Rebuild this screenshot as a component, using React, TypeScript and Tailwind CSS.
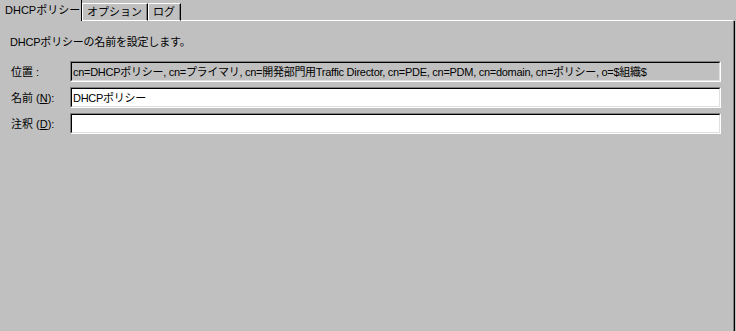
import React from "react";

function Field({ value, gray }: { value?: string; gray?: boolean }) {
  return (
    <div className="w-[651px] h-[21px] border-t border-l border-t-[#808080] border-l-[#808080] border-b border-r border-b-white border-r-white">
      <div
        className={`w-full h-full border-t border-l border-t-black border-l-black border-b border-r border-b-[#dfdfdf] border-r-[#dfdfdf] flex items-center pl-[1px] whitespace-nowrap overflow-hidden tracking-[-0.28px] ${
          gray ? "bg-[#c0c0c0]" : "bg-white"
        }`}
      >
        {value}
      </div>
    </div>
  );
}

export default function App() {
  return (
    <div className="w-[736px] h-[331px] bg-[#c0c0c0] overflow-hidden flex flex-col text-[11px] leading-[14px] text-black font-['Liberation_Sans','Noto_Sans_CJK_JP',sans-serif]">
      <div className="flex items-end h-[21px] mr-[3px]">
        <div className="w-[82px] h-[21px] border-r border-r-black flex items-center pl-[5px] pb-[2px] whitespace-nowrap">
          DHCPポリシー
        </div>
        <div className="h-[18px] w-[66px] border-t border-l border-white border-b border-b-white border-r border-r-black shadow-[inset_-1px_0_0_#808080] flex items-center pl-[4px] whitespace-nowrap">
          オプション
        </div>
        <div className="h-[18px] w-[33px] border-t border-l border-white border-b border-b-white border-r border-r-black shadow-[inset_-1px_0_0_#808080] flex items-center pl-[4px] whitespace-nowrap">
          ログ
        </div>
        <div className="flex-1 h-px bg-white" />
      </div>
      <div className="flex-1 mr-[1px] border-r border-r-black">
        <div className="h-full border-r border-r-[#808080] pl-[10px] pt-[14px]">
          <div className="h-[14px] whitespace-nowrap tracking-[-0.2px]">DHCPポリシーの名前を設定します。</div>
          <div className="mt-[12px] flex flex-col gap-[5px]">
            <div className="flex items-center">
              <div className="w-[60px] pl-[1px] whitespace-nowrap">位置 :</div>
              <Field
                gray
                value="cn=DHCPポリシー, cn=プライマリ, cn=開発部門用Traffic Director, cn=PDE, cn=PDM, cn=domain, cn=ポリシー, o=$組織$"
              />
            </div>
            <div className="flex items-center">
              <div className="w-[60px] pl-[1px] whitespace-nowrap">
                名前 (<span className="underline">N</span>):
              </div>
              <Field value="DHCPポリシー" />
            </div>
            <div className="flex items-center">
              <div className="w-[60px] pl-[1px] whitespace-nowrap">
                注釈 (<span className="underline">D</span>):
              </div>
              <Field />
            </div>
          </div>
        </div>
      </div>
    </div>
  );
}
